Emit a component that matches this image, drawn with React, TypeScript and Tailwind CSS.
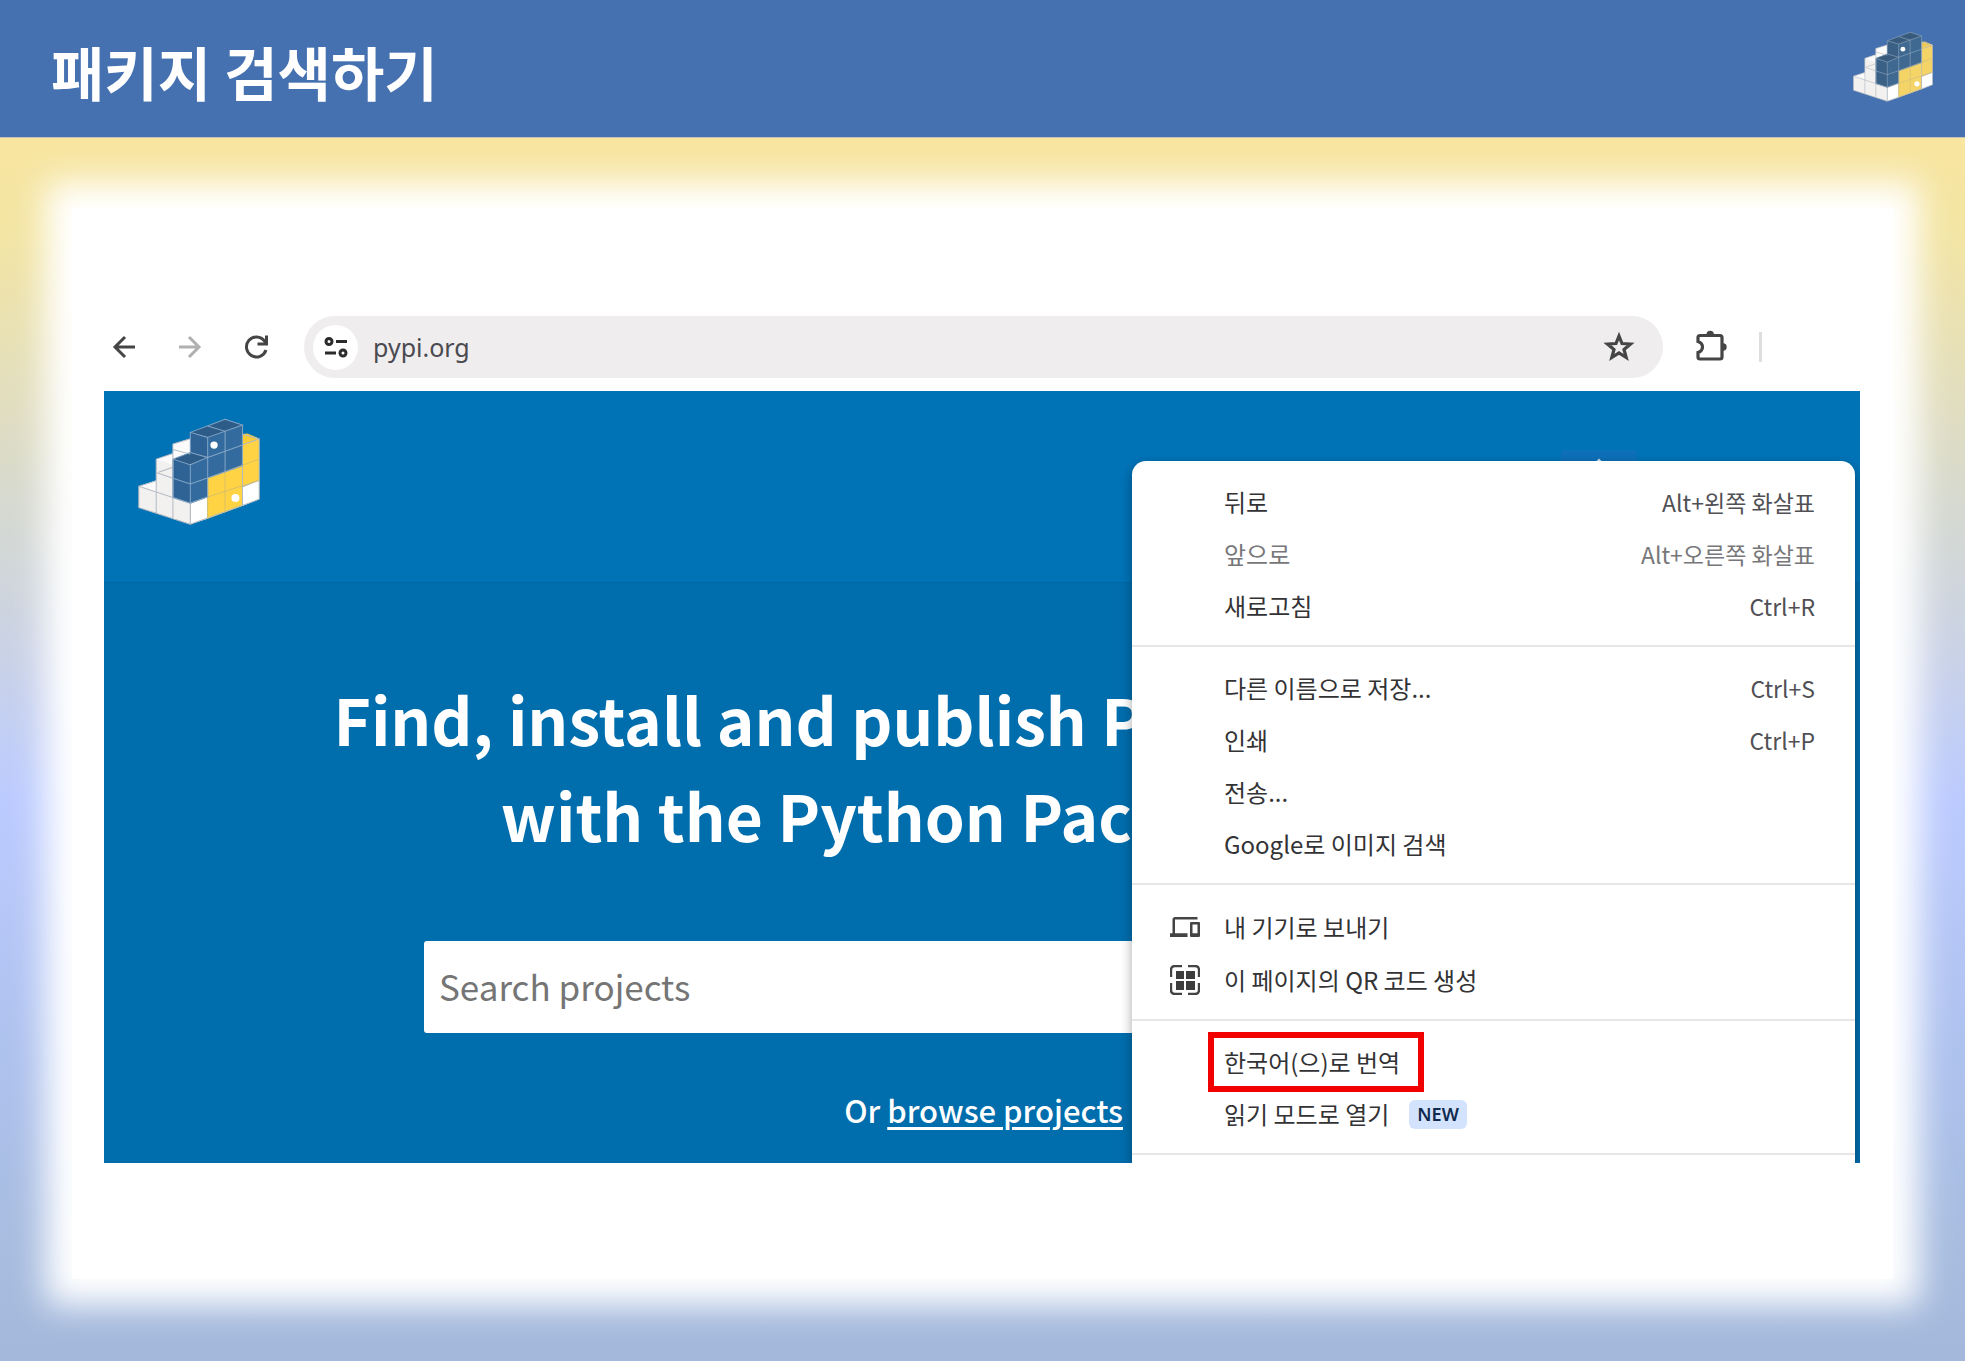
import React from 'react';
import { MdDevices } from 'react-icons/md';

function PyPiLogo({ className }: { className: string }) {
  return (
    <svg viewBox="84 82 364 320" className={className} role="img" aria-label="PyPI">
      <g>
        <path d="M86 286 138 270V205L188 188V160L240 144V340L240 400 86 350Z" fill="#f2f1f0" />
        <path d="M86 286 138 268V303Z M138 205 188 188V222Z M188 160 240 144V185L188 205Z" fill="#fbfbfb" />
        <path d="M240 337 292 318V383L240 400Z M396 288 446 268V325L396 345Z" fill="#ffffff" />
        <path d="M292 262 396 225V130L446 145V268L396 288V345L292 383Z" fill="#ffd343" />
        <path d="M396 130 410 128 446 143 396 160Z" fill="#f9cb34" />
        <path d="M188 205 240 185V125L344 86 396 103V225L292 262V318L240 337 188 320Z" fill="#336b9f" />
        <path d="M240 125 292 140V200L240 222V337L188 320V205L240 185Z" fill="#2f6295" />
        <path d="M240 125 344 86 396 103 292 140Z M188 205 240 185 292 200 240 222Z" fill="#2e5c89" />
      </g>
      <g fill="none" stroke="#b4bac2" strokeWidth="3">
        <path d="M86 286 240 337V400L86 350ZM138 205V367M188 160V384M138 245 188 262M86 286 138 270M138 205 188 188M145 244 188 229M188 160 240 144M188 176 240 190" />
        <path d="M240 400 446 325V145M240 337 292 318M396 288 446 268M396 345V130L446 145 396 162" />
      </g>
      <g fill="none" stroke="#d9c168" strokeWidth="3">
        <path d="M292 262V383M344 244V364M292 318 446 268M292 262 446 205" />
      </g>
      <g fill="none" stroke="#83a5c6" strokeWidth="3">
        <path d="M188 205 240 222V337M188 262 240 279 396 225M188 205 240 185 292 200 240 222M188 205V320L240 337 292 318V140L240 125V185M240 125 344 86 396 103 292 140M292 106 344 122V244M396 103V225M292 200 396 163" />
      </g>
      <circle cx="311" cy="163" r="11" fill="#fff" />
      <circle cx="375" cy="321" r="12" fill="#fff" />
    </svg>
  );
}

function BackIcon() {
  return (
    <svg viewBox="0 0 32 32" className="size-8" fill="none" stroke="currentColor" strokeWidth="3" aria-hidden="true">
      <path d="M27 16H7M17 6 7 16 17 26" />
    </svg>
  );
}

function ForwardIcon() {
  return (
    <svg viewBox="0 0 32 32" className="size-8" fill="none" stroke="currentColor" strokeWidth="3" aria-hidden="true">
      <path d="M5 16H25M15 6 25 16 15 26" />
    </svg>
  );
}

function ReloadIcon() {
  return (
    <svg viewBox="0 0 32 32" className="size-8" fill="none" stroke="currentColor" strokeWidth="3" aria-hidden="true">
      <path d="M26 19A10 10 0 1 1 24.500 10L26.500 12.500" />
      <path d="M26.500 4.500V13H17.500" />
    </svg>
  );
}

function StarIcon() {
  return (
    <svg viewBox="0 0 32 32" className="size-8" fill="none" stroke="currentColor" strokeWidth="3.200" aria-hidden="true">
      <path d="M16 5 19 12.500 27.500 13 21 18.500 23.200 26.500 16 22 8.800 26.500 11 18.500 4.500 13 13 12.500Z" />
    </svg>
  );
}

function PuzzleIcon() {
  return (
    <svg viewBox="0 0 34 34" className="size-[34px]" aria-hidden="true">
      <path
        d="M5 5.500H25Q27 5.500 27 7.500V27Q27 29 25 29H5Q3 29 3 27V22.500Q7.500 21 7.500 17T3 11.500V7.500Q3 5.500 5 5.500Z"
        fill="none"
        stroke="currentColor"
        strokeWidth="3.200"
      />
      <path d="M11.500 4.500A3.700 3.700 0 0 1 18.900 4.500ZM28 13.300A3.700 3.700 0 0 1 28 20.700Z" fill="currentColor" />
    </svg>
  );
}

function TuneIcon() {
  return (
    <svg viewBox="0 0 24 22" className="h-[22px] w-6" fill="none" stroke="#2b2b2b" strokeWidth="3" aria-hidden="true">
      <circle cx="5" cy="5.500" r="3" />
      <path d="M12 5.500H23M1 17H12" />
      <circle cx="19" cy="17" r="3" />
    </svg>
  );
}

function QrIcon() {
  return (
    <svg viewBox="0 0 30 30" className="size-[30px]" aria-hidden="true">
      <path
        d="M1 12V5Q1 1 5 1H12M18 1H25Q29 1 29 5V12M29 18V25Q29 29 25 29H18M12 29H5Q1 29 1 25V18"
        fill="none"
        stroke="#444"
        strokeWidth="2.400"
      />
      <path d="M6 6h8v8H6zM16 6h9v8h-9zM6 16h8v9H6zM16 16h9v9h-9z" fill="#3c3c3c" />
    </svg>
  );
}

type Item = {
  label: string;
  shortcut?: string;
  muted?: boolean;
  icon?: React.ReactNode;
  marked?: boolean;
  badge?: string;
};

const groups: Item[][] = [
  [
    { label: '뒤로', shortcut: 'Alt+왼쪽 화살표' },
    { label: '앞으로', shortcut: 'Alt+오른쪽 화살표', muted: true },
    { label: '새로고침', shortcut: 'Ctrl+R' },
  ],
  [
    { label: '다른 이름으로 저장...', shortcut: 'Ctrl+S' },
    { label: '인쇄', shortcut: 'Ctrl+P' },
    { label: '전송...' },
    { label: 'Google로 이미지 검색' },
  ],
  [
    { label: '내 기기로 보내기', icon: <MdDevices className="size-[30px]" /> },
    { label: '이 페이지의 QR 코드 생성', icon: <QrIcon /> },
  ],
  [
    { label: '한국어(으)로 번역', marked: true },
    { label: '읽기 모드로 열기', badge: 'NEW' },
  ],
];

function MenuItem({ item }: { item: Item }) {
  return (
    <button
      type="button"
      role="menuitem"
      className={`flex w-full items-center pr-10 pl-[38px] text-left text-2xl leading-8 ${item.icon ? 'h-[53px]' : 'h-[52px]'} ${item.muted ? 'text-[#77777a]' : 'text-[#333336]'}`}
    >
      <span className="flex w-[54px] shrink-0 text-[#444]">{item.icon}</span>
      <span className="relative">
        {item.label}
        {item.marked && <span className="absolute -top-3.5 -right-6 -bottom-3.5 -left-4 border-[6px] border-[#f20000]" />}
      </span>
      {item.badge && (
        <span className="ml-5 rounded-md bg-[#d3e3fd] px-2 font-['Noto_Sans'] text-lg leading-[29px] font-semibold text-[#10294f]">
          {item.badge}
        </span>
      )}
      {item.shortcut && <span className={`ml-auto text-[23px] ${item.muted ? '' : 'text-[#505055]'}`}>{item.shortcut}</span>}
    </button>
  );
}

function ContextMenu() {
  return (
    <div
      role="menu"
      className="absolute top-[70px] right-[5px] bottom-0 w-[723px] overflow-hidden rounded-t-[14px] bg-white shadow-[0_4px_12px_rgba(0,0,0,0.35)]"
    >
      {groups.map((group, i) => (
        <div key={i} className="border-b-2 border-[#e6e6e8] pt-[15px] pb-[13px]">
          {group.map((item) => (
            <MenuItem key={item.label} item={item} />
          ))}
        </div>
      ))}
    </div>
  );
}

function Toolbar() {
  return (
    <div className="flex items-center pb-[13px] pl-1 text-[#454545]">
      <div className="flex gap-[34px]">
        <button type="button" aria-label="뒤로">
          <BackIcon />
        </button>
        <button type="button" aria-label="앞으로" className="text-[#b0b0b0]">
          <ForwardIcon />
        </button>
        <button type="button" aria-label="새로고침">
          <ReloadIcon />
        </button>
      </div>
      <div className="ml-8 flex h-[62px] flex-1 items-center rounded-full bg-[#efedee] pr-7 pl-[9px]">
        <button type="button" aria-label="사이트 정보" className="flex size-[45px] items-center justify-center rounded-full bg-white">
          <TuneIcon />
        </button>
        <input
          aria-label="주소"
          defaultValue="pypi.org"
          className="ml-[15px] min-w-0 flex-1 bg-transparent font-['Noto_Sans'] text-[25px] leading-8 text-[#4a4a50] outline-none"
        />
        <button type="button" aria-label="북마크">
          <StarIcon />
        </button>
      </div>
      <button type="button" aria-label="확장 프로그램" className="ml-8">
        <PuzzleIcon />
      </button>
      <span className="mr-[98px] ml-[30px] h-[30px] w-[3px] bg-[#dedede]" />
    </div>
  );
}

function PyPiPage() {
  return (
    <div className="relative h-[772px] overflow-hidden bg-[#006dad] text-white">
      <div className="flex h-48 items-start justify-between border-b border-[#0067a5] bg-[#0073b7] pt-[27px] pr-[223px] pl-[34px]">
        <PyPiLogo className="h-[107px] w-[122px]" />
        <button type="button" aria-label="메뉴" className="mt-8 flex h-12 w-[76px] justify-center rounded bg-[#0d70b8] pt-2">
          <svg viewBox="0 0 16 10" className="h-2.5 w-4" fill="none" stroke="#cfe3f1" strokeWidth="2" aria-hidden="true">
            <path d="M1 9 8 2 15 9" />
          </svg>
        </button>
      </div>
      <div className="mr-[728px] text-right">
        <h2 className="-mr-3 mt-[87px] text-[64px] leading-[96px] font-bold whitespace-nowrap">
          <span className="block">Find, install and publish P</span>
          <span className="block pr-3">with the Python Pac</span>
        </h2>
        <div className="mt-[79px] pl-80">
          <input
            aria-label="Search projects"
            placeholder="Search projects"
            className="h-[92px] w-full rounded-l-[3px] bg-white px-[15px] pb-1 text-[35px] text-[#333] outline-none placeholder:text-[#757575]"
          />
        </div>
        <p className="mt-[53px] pr-[9px] text-[31px] leading-12 font-medium">
          Or{' '}
          <a href="#browse" className="underline decoration-[3px] underline-offset-4">
            browse projects
          </a>
        </p>
      </div>
      <ContextMenu />
    </div>
  );
}

export default function App() {
  return (
    <div className="flex min-h-screen flex-col font-['Noto_Sans_CJK_KR',sans-serif]">
      <header className="flex h-[137px] items-center justify-between bg-[#4571b0] pr-8 pl-[51px]">
        <h1 className="pt-1 text-[58px] leading-[80px] font-bold text-white">패키지 검색하기</h1>
        <PyPiLogo className="mb-1 h-[71px] w-[80px] saturate-75" />
      </header>
      <main className="flex flex-1 flex-col border-t border-[#c9c3b5] bg-[linear-gradient(to_bottom,#f8e5a0_0%,#f3e5a4_8%,#d6d9d0_30%,#cbd3e4_41%,#bccbff_54%,#aec2ee_75%,#a8bde0_90%,#a3b8db_100%)] px-[72px] pt-[70px] pb-[82px]">
        <section className="flex-1 bg-white px-8 pt-[108px] pr-[33px] shadow-[0_0_32px_26px_#fff]">
          <Toolbar />
          <PyPiPage />
        </section>
      </main>
    </div>
  );
}
